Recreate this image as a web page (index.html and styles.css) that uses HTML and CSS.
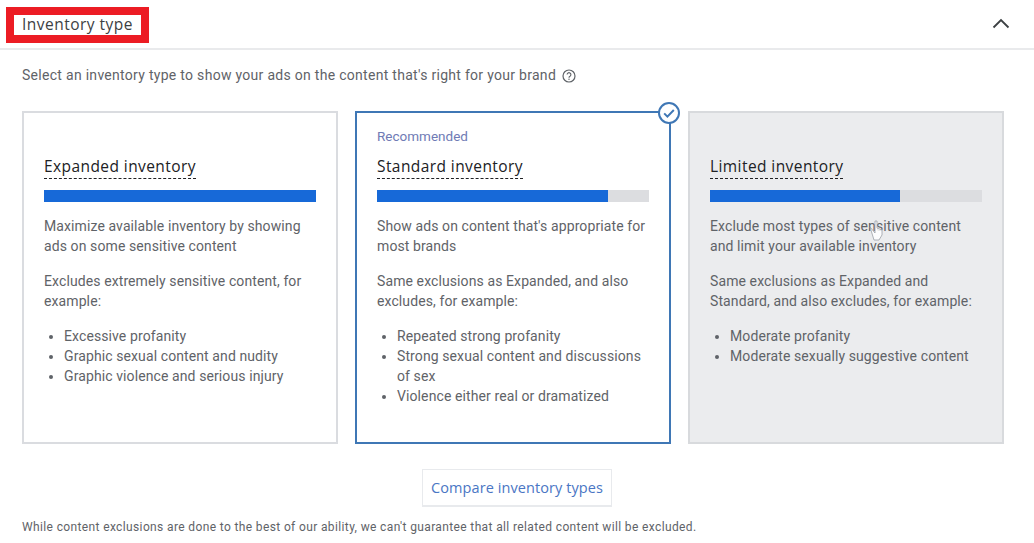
FILE: index.html
```html
<!DOCTYPE html>
<html lang="en"><head>
  <meta charset="UTF-8"/>
  <title>Inventory type</title>
  <link rel="stylesheet" href="styles.css">
</head><body>
  <div class="header">
    <div class="header-title"><span>Inventory type</span></div>
    <svg class="chevron" width="18" height="11" viewBox="0 0 18 11"><path d="M1.5 9.5 9 2l7.5 7.5" fill="none" stroke="#3c4043" stroke-width="1.8"/></svg>
  </div>
  <div class="intro">
    <span>Select an inventory type to show your ads on the content that's right for your brand</span>
    <svg class="help" width="14" height="14" viewBox="0 0 14 14"><circle cx="7" cy="7" r="6" fill="none" stroke="#5f6368" stroke-width="1.2"/><path d="M5.1 5.6a1.9 1.9 0 1 1 2.9 1.6c-.7.4-1 .8-1 1.5" fill="none" stroke="#5f6368" stroke-width="1.1"/><circle cx="7" cy="10.3" r=".7" fill="#5f6368"/></svg>
  </div>

  <div class="cards">
    <div class="card">
      <div class="rec"></div>
      <div class="title-row"><span class="card-title">Expanded inventory</span></div>
      <div class="bar"><div class="bar-fill" style="width:100%"></div></div>
      <p>Maximize available inventory by showing ads on some sensitive content</p>
      <p>Excludes extremely sensitive content, for example:</p>
      <ul>
        <li>Excessive profanity</li>
        <li>Graphic sexual content and nudity</li>
        <li>Graphic violence and serious injury</li>
      </ul>
    </div>
    <div class="card selected">
      <svg class="check" width="24" height="24" viewBox="0 0 24 24"><circle cx="12" cy="12" r="10" fill="#fff" stroke="#3f77b5" stroke-width="2"/><path d="M7.2 12.4l3.2 3.2 6.4-6.6" fill="none" stroke="#3f77b5" stroke-width="2"/></svg>
      <div class="rec">Recommended</div>
      <div class="title-row"><span class="card-title">Standard inventory</span></div>
      <div class="bar"><div class="bar-fill" style="width:85%"></div></div>
      <p>Show ads on content that's appropriate for most brands</p>
      <p>Same exclusions as Expanded, and also excludes, for example:</p>
      <ul>
        <li>Repeated strong profanity</li>
        <li>Strong sexual content and discussions of sex</li>
        <li>Violence either real or dramatized</li>
      </ul>
    </div>
    <div class="card limited">
      <div class="rec"></div>
      <div class="title-row"><span class="card-title">Limited inventory</span></div>
      <div class="bar"><div class="bar-fill" style="width:70%"></div></div>
      <p>Exclude most types of sensitive content and limit your available inventory</p>
      <p>Same exclusions as Expanded and Standard, and also excludes, for example:</p>
      <ul>
        <li>Moderate profanity</li>
        <li>Moderate sexually suggestive content</li>
      </ul>
      <svg class="cursor" width="16" height="22" viewBox="0 0 16 22"><path d="M2 8l5 6 0-12 2 0 0 7 5 2 0 5-3 5-5 0z" fill="#fff" fill-opacity=".85" stroke="#9aa0a6" stroke-width=".8"/></svg>
    </div>
  </div>

  <div class="compare-row"><button class="compare">Compare inventory types</button></div>
  <div class="note">While content exclusions are done to the best of our ability, we can't guarantee that all related content will be excluded.</div>
</body></html>
```

FILE: styles.css
```css
body {margin:0;font-family:Roboto,'Liberation Sans',sans-serif;color:#5f6368;background:#fff;font-size:14px;overflow:hidden}
.header {height:48px;display:flex;align-items:center;justify-content:space-between;
         padding:0 24px 0 6px;border-bottom:2px solid #e9eaec;box-sizing:content-box}
.header-title {border:8px solid #ec1c24;background:#fff;padding:0 8px;height:20px;line-height:18px;
               margin-top:2px;font-family:'Open Sans',sans-serif;font-size:15.5px;font-weight:500;color:#3c4043;letter-spacing:.47px}
.chevron {display:block;margin-top:-1px}
.intro {display:flex;align-items:center;gap:6px;padding:0 22px;height:20px;margin-top:15px;letter-spacing:.29px}
.help {display:block;margin-top:1px}
.cards {display:flex;gap:17px;padding:0 22px;margin-top:26px}
.card {position:relative;width:316px;height:333px;box-sizing:border-box;padding:13px 20px 0 20px;
       border:2px solid #dadce0;background:#fff}
.card.selected {border-color:#3f77b5}
.card.limited {background:#ebecee;border-color:#d8dadd}
.rec {height:20px;line-height:20px;color:#6f7bb5;font-size:13.5px}
.title-row {height:44px;padding-top:9px;box-sizing:border-box}
.card-title {display:inline-block;height:23px;line-height:22px;font-family:'Open Sans',sans-serif;font-size:15.5px;
             font-weight:500;color:#202124;border-bottom:1px dashed #202124;letter-spacing:.42px}
.bar {height:12px;background:#dcdde0;width:272px}
.bar-fill {height:100%;background:#1769d8}
.card p {margin:0 0 15px;line-height:20px;letter-spacing:.1px}
.bar + p {margin-top:14px}
.card ul {margin:0;padding:0 0 0 20px;line-height:20px;letter-spacing:.1px}
.check {position:absolute;top:-12px;right:-12px}
.cursor {position:absolute;left:178px;top:106px}
.compare-row {display:flex;justify-content:center;margin-top:25px}
.compare {width:190px;height:38px;background:#fff;border:1px solid #e8eaed;border-bottom-width:2px;
          font-family:'Open Sans',sans-serif;font-size:14.5px;font-weight:500;color:#4a76c4;padding:0;letter-spacing:.08px}
.note {padding:0 22px;margin-top:12px;font-size:12px;line-height:16px;letter-spacing:.37px}
```
